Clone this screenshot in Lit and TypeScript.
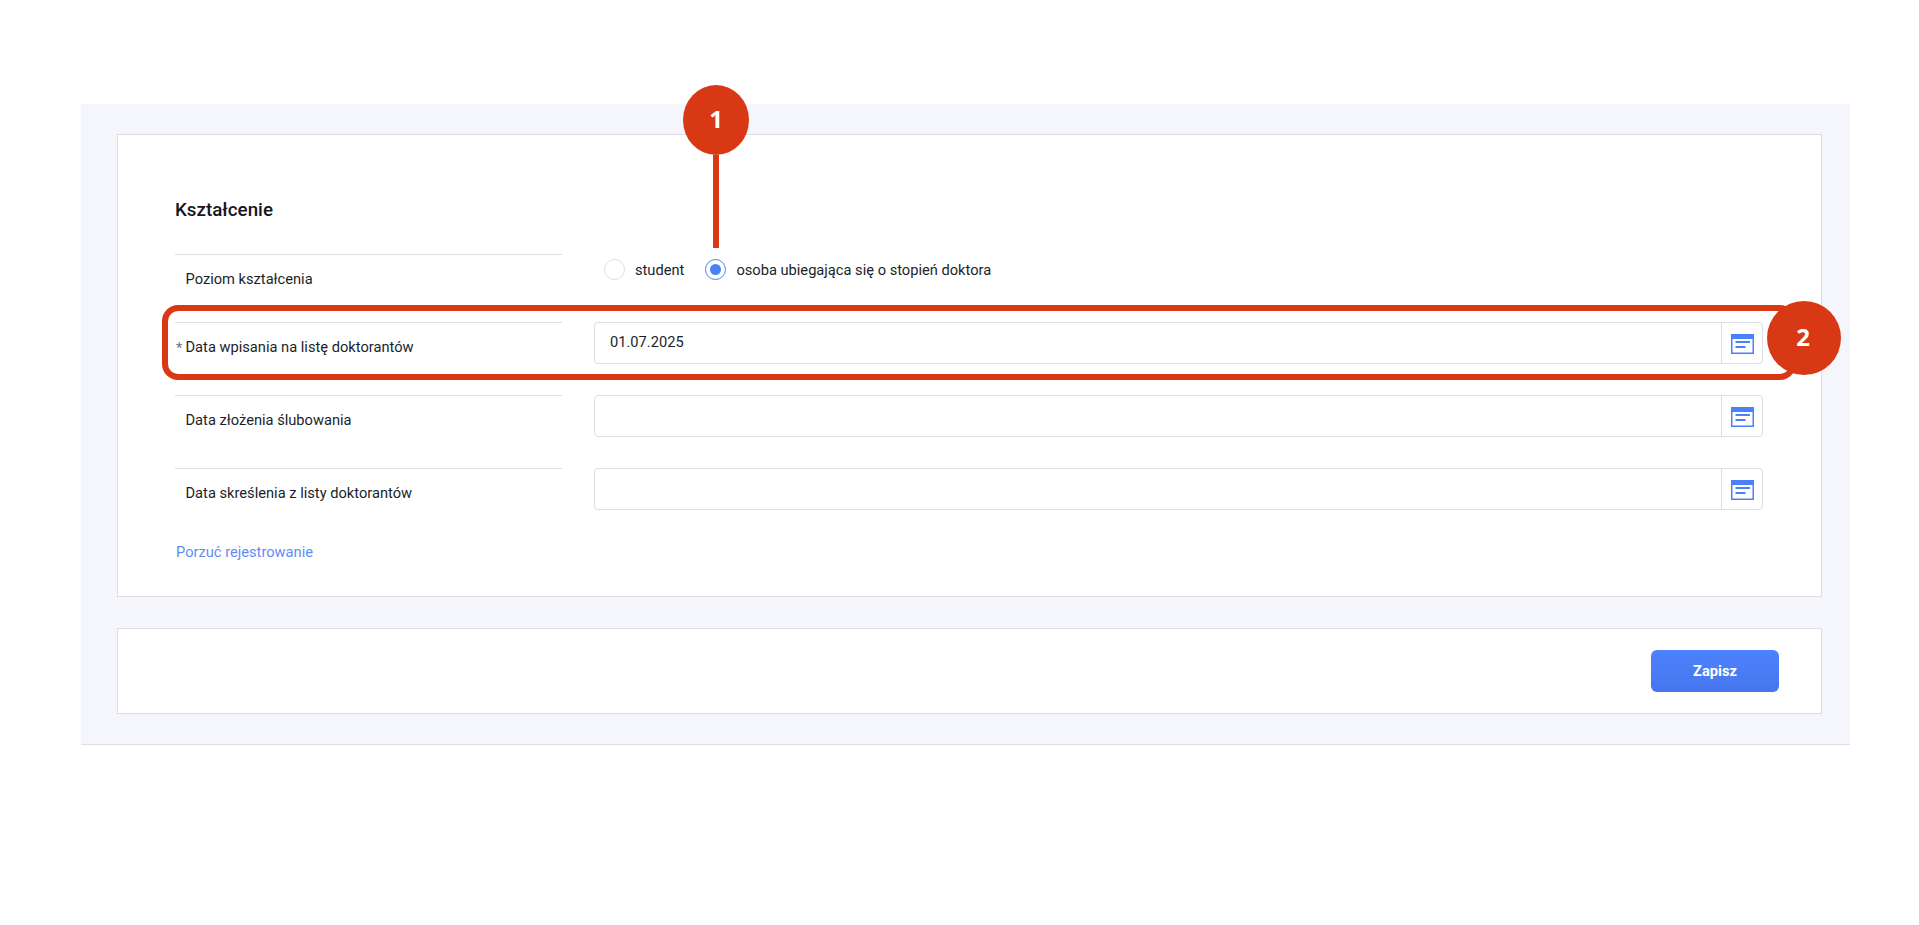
import { LitElement, html, css } from "lit";
import { customElement } from "lit/decorators.js";

const calendar = html`<svg class="cal" width="23" height="20" viewBox="0 0 23 20" aria-hidden="true">
  <rect width="23" height="20" fill="#4a80fb"></rect>
  <rect x="1.5" y="5" width="20" height="13.5" fill="#fff"></rect>
  <rect x="4.5" y="7" width="14.5" height="2" fill="#4a80fb"></rect>
  <rect x="4.5" y="12" width="10" height="2" fill="#4a80fb"></rect>
</svg>`;

@customElement("app-root")
export class AppRoot extends LitElement {
  static styles = css`
    :host {
      display: block;
      position: relative;
      height: 925px;
      box-sizing: border-box;
      padding: 104px 69px 0 81px;
      background: #fff;
      font-family: Roboto, "Liberation Sans", sans-serif;
      font-size: 14.67px;
      color: #1a1f2b;
    }
    .panel {
      height: 641px;
      box-sizing: border-box;
      padding: 30px 28px 0 36px;
      background: #f4f6fb;
      border-bottom: 1px solid #dcdde5;
      display: flex;
      flex-direction: column;
      gap: 31px;
    }
    .card {
      background: #fff;
      border: 1px solid #dcdde5;
    }
    .form {
      height: 463px;
      box-sizing: border-box;
      padding: 59px 57px 0;
    }
    h2 {
      margin: 0 0 28px;
      font-size: 18.8px;
      line-height: 32px;
      font-weight: 500;
      color: #14171f;
    }
    .row {
      display: grid;
      grid-template-columns: 387px 1169px;
      column-gap: 32px;
      height: 73px;
    }
    .row.first { height: 68px; }
    .label {
      border-top: 1px solid #dcdde5;
      padding: 14px 0 0 10.5px;
      line-height: 21px;
      position: relative;
    }
    .star {
      position: absolute;
      left: 1px;
      top: 15px;
      color: #6d7488;
    }
    .options {
      display: flex;
      align-items: center;
      height: 31px;
      padding-left: 10px;
    }
    .radio {
      width: 21px;
      height: 21px;
      box-sizing: border-box;
      border-radius: 50%;
      border: 1px solid #dcdde5;
      background: #fff;
      margin-right: 10px;
      display: flex;
      align-items: center;
      justify-content: center;
    }
    .radio.on { border-color: #4a80fb; }
    .radio.on::after {
      content: "";
      width: 11px;
      height: 11px;
      border-radius: 50%;
      background: #4a80fb;
    }
    .opt { margin-right: 21px; line-height: 20px; }
    .field {
      display: flex;
      height: 42px;
      box-sizing: border-box;
      border: 1px solid #dcdde5;
      border-radius: 4px;
      background: #fff;
    }
    .value {
      flex: 1;
      padding-left: 15px;
      line-height: 38px;
    }
    .addon {
      width: 41px;
      flex: none;
      box-sizing: border-box;
      padding-top: 2px;
      border-left: 1px solid #dcdde5;
      display: flex;
      align-items: center;
      justify-content: center;
    }
    .link {
      display: block;
      margin-top: 1px;
      padding-left: 1px;
      color: #5f8cf7;
      line-height: 20px;
      text-decoration: none;
    }
    .actions {
      height: 86px;
      box-sizing: border-box;
      display: flex;
      justify-content: flex-end;
      align-items: flex-start;
      padding: 21px 42px 0 0;
    }
    button {
      width: 128px;
      height: 42px;
      border: none;
      border-radius: 6px;
      background: linear-gradient(#4d82fd, #4676ee);
      color: #fff;
      font: 700 14.67px Roboto, "Liberation Sans", sans-serif;
    }
    .pin {
      position: absolute;
      left: 683px;
      top: 85px;
      width: 66px;
      height: 70px;
      padding-bottom: 3px;
      box-sizing: border-box;
      border-radius: 50%;
      background: #d93814;
      color: #fff;
      font: 700 24px "Open Sans", "Liberation Sans", sans-serif;
      display: flex;
      align-items: center;
      justify-content: center;
    }
    .stem {
      position: absolute;
      left: 713px;
      top: 155px;
      width: 6px;
      height: 93px;
      background: #d93814;
    }
    .frame {
      position: absolute;
      left: 162px;
      top: 305px;
      width: 1634px;
      height: 75px;
      box-sizing: border-box;
      border: 6px solid #d93814;
      border-radius: 16px;
    }
    .pin.two {
      left: 1767px;
      top: 301px;
      width: 74px;
      height: 74px;
      padding: 0 2px 3px 0;
    }
  `;

  private dateRow(label: string, value = "", required = false) {
    return html`<div class="row">
      <div class="label">${required ? html`<span class="star">*</span>` : ""}${label}</div>
      <div class="field">
        <div class="value">${value}</div>
        <div class="addon">${calendar}</div>
      </div>
    </div>`;
  }

  render() {
    return html`
      <div class="panel">
        <section class="card form">
          <h2>Kształcenie</h2>
          <div class="row first">
            <div class="label">Poziom kształcenia</div>
            <div class="options">
              <span class="radio"></span><span class="opt">student</span>
              <span class="radio on"></span><span class="opt">osoba ubiegająca się o stopień doktora</span>
            </div>
          </div>
          ${this.dateRow("Data wpisania na listę doktorantów", "01.07.2025", true)}
          ${this.dateRow("Data złożenia ślubowania")}
          ${this.dateRow("Data skreślenia z listy doktorantów")}
          <a class="link" href="#">Porzuć rejestrowanie</a>
        </section>
        <section class="card actions"><button>Zapisz</button></section>
      </div>
      <div class="stem"></div>
      <div class="pin">1</div>
      <div class="frame"></div>
      <div class="pin two">2</div>
    `;
  }
}
